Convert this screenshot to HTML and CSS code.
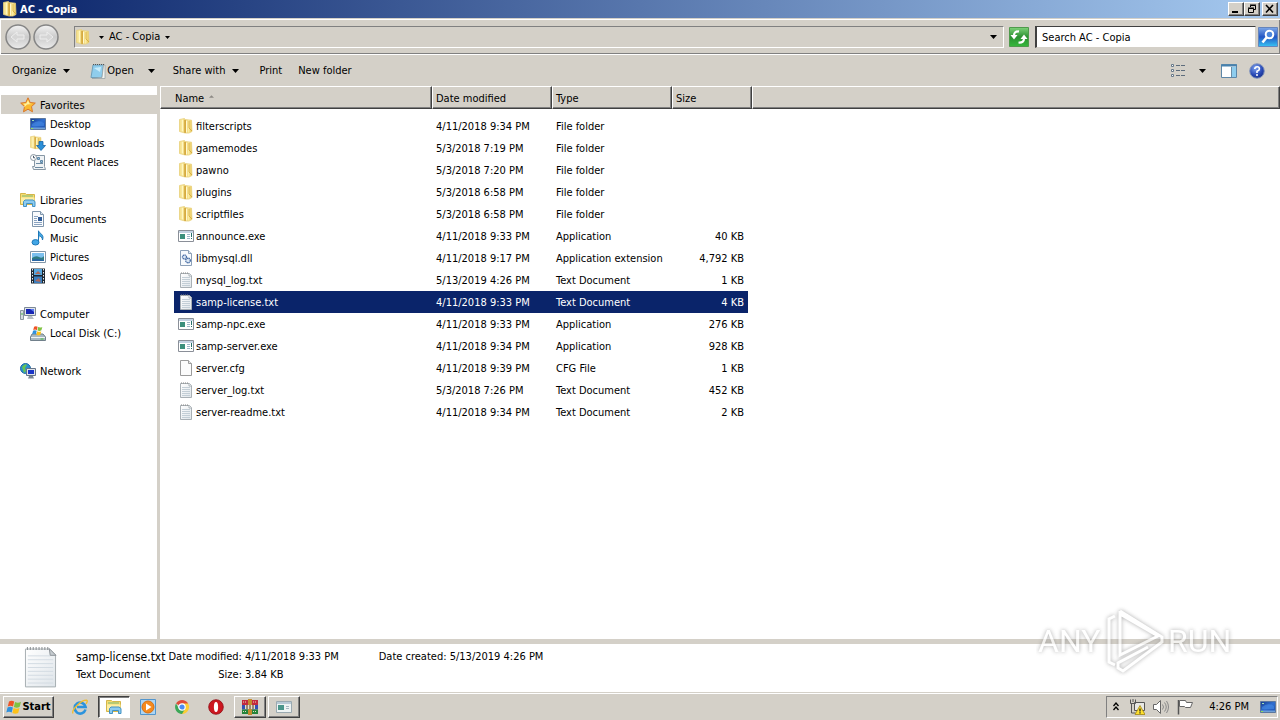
FILE: index.html
```html
<!DOCTYPE html>
<html lang="en">
<head>
<meta charset="utf-8">
<title>AC - Copia</title>
<link rel="stylesheet" href="styles.css">
</head>
<body>
<svg class="defs" aria-hidden="true">
  <defs>
    <linearGradient id="g-folder" x1="0" x2="1" y1="0" y2="0"><stop offset="0" stop-color="#f3dc84"/><stop offset=".25" stop-color="#fbeea6"/><stop offset=".5" stop-color="#e2b94a"/><stop offset=".7" stop-color="#fdf0a8"/><stop offset="1" stop-color="#e6c14f"/></linearGradient>
    <linearGradient id="g-paper" x1="0" x2="1" y1="0" y2="1"><stop offset="0" stop-color="#fff"/><stop offset="1" stop-color="#dfe5ea"/></linearGradient>
    <linearGradient id="g-screen" x1="0" x2="1" y1="0" y2="1"><stop offset="0" stop-color="#173a8c"/><stop offset=".5" stop-color="#2f6fd0"/><stop offset="1" stop-color="#1d4fae"/></linearGradient>
    <linearGradient id="g-green" x1="0" x2="0" y1="0" y2="1"><stop offset="0" stop-color="#7fd27a"/><stop offset=".5" stop-color="#2a9030"/><stop offset="1" stop-color="#36b83c"/></linearGradient>
    <linearGradient id="g-blue" x1="0" x2="0" y1="0" y2="1"><stop offset="0" stop-color="#7ea8e8"/><stop offset=".5" stop-color="#2356c4"/><stop offset="1" stop-color="#38c4f4"/></linearGradient>
    <linearGradient id="g-ball" x1="0" x2="0" y1="0" y2="1"><stop offset="0" stop-color="#f4f4f4"/><stop offset=".5" stop-color="#cbcbcb"/><stop offset="1" stop-color="#ececec"/></linearGradient>
    <radialGradient id="g-help" cx=".4" cy=".3" r=".8"><stop offset="0" stop-color="#7fa4f0"/><stop offset=".6" stop-color="#2747b4"/><stop offset="1" stop-color="#142a80"/></radialGradient>
  </defs>
  <symbol id="i-folder" viewBox="0 0 16 16"><path d="M1.500 1.500 6.500.5v1l7 .7.500 11.300-3 1.500H7l-5.500-1.500z" fill="url(#g-folder)" stroke="#e8d07c" stroke-width=".8"/><path d="M7 2v13" stroke="#c9982f"/><path d="M8.500 2.500v12" stroke="#fff9d0"/><path d="M4.500 2v11" stroke="#fff6c2"/><path d="M11 3v7l3 3" fill="none" stroke="#d2a63a" stroke-width=".8"/></symbol>
  <symbol id="i-txt" viewBox="0 0 16 16"><path d="M2.500 1.500h9l2 2v12h-11z" fill="url(#g-paper)" stroke="#a9b0b5"/><path d="M4 5.500h8M4 7.500h8M4 9.500h8M4 11.500h8M4 13.500h8" stroke="#c3ced6"/><path d="M3 1h8" stroke="#888" stroke-dasharray="1 1"/><path d="M11 1.500v2.500h2.500" fill="#fff" stroke="#9ba3a8" stroke-width=".8"/></symbol>
  <symbol id="i-bigtxt" viewBox="0 0 34 42"><path d="M1.500 2.500h25l6 6v33h-31z" fill="url(#g-paper)" stroke="#a5adb1"/><path d="M4 9.500h23M4 13.500h26M4 17.500h26M4 21.500h26M4 25.500h26M4 29.500h26M4 33.500h26M4 37.500h26" stroke="#d3dbe2"/><path d="M3 2h22" stroke="#858b8e" stroke-width="3" stroke-dasharray="1 2"/><path d="m26 2 1 7h6z" fill="#c6ccd0" stroke="#8d9499"/></symbol>
  <symbol id="i-file" viewBox="0 0 16 16"><path d="M2.500.5h8l3 3v12h-11z" fill="#fbfbfb" stroke="#9b9b9b"/><path d="M10.500.5v3h3" fill="#e5e5e5" stroke="#9b9b9b"/></symbol>
  <symbol id="i-dll" viewBox="0 0 16 16"><path d="M2.500.5h8l3 3v12h-11z" fill="#f7fafd" stroke="#8ca0b8"/><path d="M10.500.5v3h3" fill="#dce6f0" stroke="#8ca0b8"/><circle cx="6.500" cy="7" r="2" fill="#dce8f5" stroke="#4a6fa8" stroke-width="1.300" stroke-dasharray="1.200 .5"/><circle cx="10" cy="10.500" r="2.300" fill="#dce8f5" stroke="#39609c" stroke-width="1.300" stroke-dasharray="1.200 .5"/></symbol>
  <symbol id="i-exe" viewBox="0 0 16 16"><path d="M.5 2.500h15v11H.5z" fill="#fff" stroke="#8a8f98"/><path d="M1 3h14v2H1z" fill="#c4d2e2"/><path d="M2 6h5v5H2z" fill="#3c8f7c"/><path d="M9 6.500h3M9 8.500h3M9 10.500h3" stroke="#9db6c8"/><path d="M13.500 5v4M13.500 10v1" stroke="#27706a"/></symbol>
  <symbol id="i-star" viewBox="0 0 16 16"><path d="m8 .8 2.200 4.700 5.100.6-3.800 3.500 1 5.200L8 12.200l-4.500 2.600 1-5.200L.7 6.100l5.100-.6z" fill="#fbb92e" stroke="#d9772b"/><path d="m8 3 1.500 3.500 3 .4-5.500.6-3 3 .8-2.500L3 6.800l3.300-.4z" fill="#fff2a0"/></symbol>
  <symbol id="i-desktop" viewBox="0 0 16 16"><path d="M.5 2.500h15v11H.5z" fill="url(#g-screen)" stroke="#5c789f"/><path d="M1 11.500h14v1.500H1z" fill="#6f9fd6"/><path d="M2 4h2v1H2z" fill="#9fe0b0"/><path d="M1 12h2v1H1z" fill="#8ee05a"/><path d="M2 8q6-5 12-1v3H2z" fill="#468be5" opacity=".6"/></symbol>
  <symbol id="i-down" viewBox="0 0 16 16"><use href="#i-folder" x="-1" width="14" height="15"/><path d="M9 6.500h4v4h2.500L11 15.500 6.500 10.500H9z" fill="#2b8fd8" stroke="#1763a6" stroke-width=".8"/></symbol>
  <symbol id="i-recent" viewBox="0 0 16 16"><path d="M4.500 1.500h10v11l1 3h-12l-1-3h2z" fill="#f0f3f5" stroke="#8797a4"/><path d="M6 9.500h7M5 13.500h8" stroke="#6e8ba2"/><path d="M7.500 3.500h2v2h-2zM10.500 6.500h2v2h-2z" fill="#9cc0dd" stroke="#5e88a8"/><circle cx="3.500" cy="3.500" r="3" fill="#fff" stroke="#8a97a0"/><path d="M3.500 1.800v2h1.500" fill="none" stroke="#456"/></symbol>
  <symbol id="i-lib" viewBox="0 0 16 16"><path d="M.5 1.500h5l1 1h8v10H.5z" fill="#f6dc71" stroke="#d4b649"/><path d="M2 4h11" stroke="#78b878"/><path d="M1 5.500h13.500v6H1z" fill="#fdeea4"/><path d="M3.500 14.500v-5l1.500-1.500h8l2 1.500v5h-2.500v-3h-6v3z" fill="#8ccbf0" stroke="#4392c4"/></symbol>
  <symbol id="i-doc" viewBox="0 0 16 16"><path d="M2.500.5h8l3 3v12h-11z" fill="#f9fbfd" stroke="#8096ac"/><path d="M10.500.5v3h3" fill="#dce6f0" stroke="#8096ac"/><path d="M4 5.500h4M4 7.500h3M4 9.500h3M4 11.500h8M4 13.500h8" stroke="#8ba3c0"/><path d="M8 6h4v4H8z" fill="#2e5b98"/></symbol>
  <symbol id="i-music" viewBox="0 0 16 16"><path d="M8.500 12V.8C9.500 4 14.500 4 12.500 10 12.500 7 10 6 9.500 6" fill="#46a8e2" stroke="#1f78b8"/><ellipse cx="5.500" cy="12.300" rx="3.500" ry="2.700" fill="#42a6e6" stroke="#1f78b8"/></symbol>
  <symbol id="i-pic" viewBox="0 0 16 16"><path d="M.5 2.500h15v11H.5z" fill="#fff" stroke="#8296a8"/><path d="M2 4h12v8H2z" fill="#7cc0ee"/><path d="M2 9q4-3 7-1t5-1v5H2z" fill="#2f7c83"/><path d="M2 10.500q5-1 12 .5v1H2z" fill="#2966a4"/></symbol>
  <symbol id="i-video" viewBox="0 0 16 16"><path d="M1 .5h14v15H1z" fill="#1d2730"/><path d="M4 1h8v6H4z" fill="#56a8e0"/><path d="M4 8.500h8V15H4z" fill="#3a7fc0"/><path d="m5 6 3-3 3 3zM5 13l4-3 2 4z" fill="#af6a5c"/><path d="M2.500 1v14M13.500 1v14" stroke="#e8eef2" stroke-dasharray="1.500 1.500"/></symbol>
  <symbol id="i-computer" viewBox="0 0 16 16"><path d="M.5 4.500h3v9h-3z" fill="#d5dbe0" stroke="#8b96a0"/><path d="M1 8h2" stroke="#4cb84a"/><path d="M4.500 1.500h11v8h-11z" fill="#dfe4ea" stroke="#7c8896"/><path d="M6 3h8v5H6z" fill="#1726b4"/><path d="M10 3h4v3z" fill="#5c7bf0"/><path d="M8 10h4l2 3H7z" fill="#b8bfc6"/></symbol>
  <symbol id="i-disk" viewBox="0 0 16 16"><path d="M2 9h11l2.500 3v3.500H.5V12z" fill="#a9b8c1" stroke="#71808b"/><path d="M1 12.500h14" stroke="#eef3f5"/><path d="M10.500 14h3" stroke="#45c33d"/><use href="#i-win" x="2" y="0" width="11" height="11"/></symbol>
  <symbol id="i-win" viewBox="0 0 16 16"><path d="M3 2.500Q5.500.8 8.200 2.500L7 7.500Q4.500 5.800 1.800 7.500z" fill="#ef5325"/><path d="M9 3q3 1.500 6-.2l-1.300 5Q11 9.500 7.900 8z" fill="#7fc241"/><path d="M1.500 8.500Q4.200 6.800 6.900 8.500l-1.200 5Q3 12 .3 13.500z" fill="#2f91dd"/><path d="M7.600 9q3 1.500 5.900 0l-1.300 5q-2.700 1.600-5.800 0z" fill="#fdc21a"/></symbol>
  <symbol id="i-network" viewBox="0 0 16 16"><circle cx="5.500" cy="5.500" r="5" fill="#2a8fd0" stroke="#1f6aa6"/><path d="M2 4q3-4 5-2L5 5l1 3-2 2z" fill="#65c455"/><path d="M6.500 5.500h9v7h-9z" fill="#dfe4ea" stroke="#65748a"/><path d="M8 7h6v4H8z" fill="#1b36c8"/><path d="M9 13h4l1 2.500H8z" fill="#7b8794"/></symbol>
  <symbol id="i-note" viewBox="0 0 16 16"><path d="M3 2h10.500l-1.500 12.500H1z" fill="#8fcdec" stroke="#6ea0bb"/><path d="M13.500 2h1.500v13.500H2L12 14.500z" fill="#f4f4f0" stroke="#98a4a8" stroke-width=".8"/><path d="M3 1.500h11" stroke="#555" stroke-dasharray="1 1"/><path d="m4 5 7-1-1 5z" fill="#c9ecfb"/></symbol>
  <symbol id="i-tri" viewBox="0 0 7 4"><path d="M0 0h7L3.500 4z" fill="currentColor"/></symbol>
</svg>

<header class="titlebar">
  <svg class="ico"><use href="#i-folder"/></svg>
  <h1>AC - Copia</h1>
  <div class="winbtns">
    <button class="raised" aria-label="Minimize"><svg viewBox="0 0 12 10"><path d="M2 8h6" stroke="#000" stroke-width="2"/></svg></button>
    <button class="raised" aria-label="Restore"><svg viewBox="0 0 12 10"><path d="M4.500 3V1.500h5v4H8M4 1h6" fill="none" stroke="#000"/><path d="M2.500 4.500h5v4h-5zM2 4h6" fill="none" stroke="#000"/></svg></button>
    <button class="raised close" aria-label="Close"><svg viewBox="0 0 12 10"><path d="m2 1 7 7.500M9 1 2 8.500" stroke="#000" stroke-width="1.600"/></svg></button>
  </div>
</header>

<nav class="address" aria-label="Address">
  <div class="history">
    <button aria-label="Back"><svg viewBox="0 0 26 26"><circle cx="13" cy="13" r="12" fill="url(#g-ball)" stroke="#858585" stroke-width="1.500"/><path d="M6 13l6-5v3h7v4h-7v3z" fill="#d6d6d6" stroke="#eee"/></svg></button>
    <button aria-label="Forward"><svg viewBox="0 0 26 26"><circle cx="13" cy="13" r="12" fill="url(#g-ball)" stroke="#858585" stroke-width="1.500"/><path d="M20 13l-6-5v3H7v4h7v3z" fill="#d6d6d6" stroke="#eee"/></svg></button>
  </div>
  <div class="path inset">
    <svg class="ico"><use href="#i-folder"/></svg>
    <button class="crumb"><svg class="tri small"><use href="#i-tri"/></svg>AC - Copia<svg class="tri small"><use href="#i-tri"/></svg></button>
    <button class="drop" aria-label="Previous locations"><svg class="tri"><use href="#i-tri"/></svg></button>
  </div>
  <button class="square" aria-label="Refresh"><svg viewBox="0 0 20 20"><path d="M.5.5h19v19H.5z" fill="url(#g-green)" stroke="#4f9a4c"/><path d="M10 4.500Q5 4 5 8.500" fill="none" stroke="#fff" stroke-width="2.200"/><path d="M1.500 8h7L5 12.500z" fill="#fff"/><path d="M9.500 15.500q5.500.5 5.500-4" fill="none" stroke="#fff" stroke-width="2.200"/><path d="M11.500 12h7L15 7.500z" fill="#fff"/></svg></button>
  <input class="search inset" type="text" aria-label="Search" value="Search AC - Copia">
  <button class="square go" aria-label="Start search"><svg viewBox="0 0 20 20"><path d="M.5.5h19v19H.5z" fill="url(#g-blue)" stroke="#6685bb"/><circle cx="11.500" cy="7.500" r="3.800" fill="#4c86dc" stroke="#fff" stroke-width="2"/><path d="m8.500 10.500-4 5" stroke="#fff" stroke-width="2.600"/></svg></button>
</nav>

<div class="toolbar" role="toolbar">
  <button>Organize<svg class="tri"><use href="#i-tri"/></svg></button>
  <button class="open"><svg class="ico"><use href="#i-note"/></svg>Open<svg class="tri far"><use href="#i-tri"/></svg></button>
  <button>Share with<svg class="tri"><use href="#i-tri"/></svg></button>
  <button class="print">Print</button>
  <button>New folder</button>
  <div class="views">
    <button aria-label="View"><svg class="ico" viewBox="0 0 16 16"><path d="M1.500 1.500h2v2h-2zM1.500 6.500h2v2h-2zM1.500 11.500h2v2h-2z" fill="#fff" stroke="#66788a"/><path d="M6 2.500h10M6 7.500h10M6 12.500h10" stroke="#5d6c7c" stroke-dasharray="4 1"/></svg><svg class="tri"><use href="#i-tri"/></svg></button>
    <button aria-label="Preview pane"><svg class="ico" viewBox="0 0 16 16"><path d="M.5 1.500h15v13H.5z" fill="#fff" stroke="#5d87a8"/><path d="M0 2.500h16" stroke="#4882ae" stroke-width="2"/><path d="M10.500 4v10" stroke="#6b8ca5"/><path d="M11 4h4v10h-4z" fill="#8ecdee"/></svg></button>
    <button aria-label="Help"><svg class="ico" viewBox="0 0 16 16"><circle cx="8" cy="8" r="7.300" fill="url(#g-help)" stroke="#8496bd"/><path d="M5.700 6Q6 3.800 8.200 3.800T10.400 6Q10.400 7.300 8 8.300v1.600" fill="none" stroke="#fff" stroke-width="1.600"/><circle cx="8" cy="12" r="1" fill="#fff"/></svg></button>
  </div>
</div>

<main class="content">
  <nav class="tree" aria-label="Folders">
    <ul>
      <li class="root current"><a href="#"><svg class="ico"><use href="#i-star"/></svg>Favorites</a></li>
      <li><a href="#"><svg class="ico"><use href="#i-desktop"/></svg>Desktop</a></li>
      <li><a href="#"><svg class="ico"><use href="#i-down"/></svg>Downloads</a></li>
      <li><a href="#"><svg class="ico"><use href="#i-recent"/></svg>Recent Places</a></li>
    </ul>
    <ul>
      <li class="root"><a href="#"><svg class="ico"><use href="#i-lib"/></svg>Libraries</a></li>
      <li><a href="#"><svg class="ico"><use href="#i-doc"/></svg>Documents</a></li>
      <li><a href="#"><svg class="ico"><use href="#i-music"/></svg>Music</a></li>
      <li><a href="#"><svg class="ico"><use href="#i-pic"/></svg>Pictures</a></li>
      <li><a href="#"><svg class="ico"><use href="#i-video"/></svg>Videos</a></li>
    </ul>
    <ul>
      <li class="root"><a href="#"><svg class="ico"><use href="#i-computer"/></svg>Computer</a></li>
      <li><a href="#"><svg class="ico"><use href="#i-disk"/></svg>Local Disk (C:)</a></li>
    </ul>
    <ul>
      <li class="root"><a href="#"><svg class="ico"><use href="#i-network"/></svg>Network</a></li>
    </ul>
  </nav>

  <section class="files">
    <table>
      <colgroup><col class="c-name"><col class="c-date"><col class="c-type"><col class="c-size"><col></colgroup>
      <thead><tr><th>Name<svg class="sort" viewBox="0 0 6 3"><path d="M0 3h6L3 0z" fill="#8c8984"/></svg></th><th>Date modified</th><th>Type</th><th>Size</th><th></th></tr></thead>
      <tbody>
        <tr><td><div><svg class="ico"><use href="#i-folder"/></svg>filterscripts</div></td><td><div>4/11/2018 9:34 PM</div></td><td><div>File folder</div></td><td><div></div></td></tr>
        <tr><td><div><svg class="ico"><use href="#i-folder"/></svg>gamemodes</div></td><td><div>5/3/2018 7:19 PM</div></td><td><div>File folder</div></td><td><div></div></td></tr>
        <tr><td><div><svg class="ico"><use href="#i-folder"/></svg>pawno</div></td><td><div>5/3/2018 7:20 PM</div></td><td><div>File folder</div></td><td><div></div></td></tr>
        <tr><td><div><svg class="ico"><use href="#i-folder"/></svg>plugins</div></td><td><div>5/3/2018 6:58 PM</div></td><td><div>File folder</div></td><td><div></div></td></tr>
        <tr><td><div><svg class="ico"><use href="#i-folder"/></svg>scriptfiles</div></td><td><div>5/3/2018 6:58 PM</div></td><td><div>File folder</div></td><td><div></div></td></tr>
        <tr><td><div><svg class="ico"><use href="#i-exe"/></svg>announce.exe</div></td><td><div>4/11/2018 9:33 PM</div></td><td><div>Application</div></td><td><div>40 KB</div></td></tr>
        <tr><td><div><svg class="ico"><use href="#i-dll"/></svg>libmysql.dll</div></td><td><div>4/11/2018 9:17 PM</div></td><td><div>Application extension</div></td><td><div>4,792 KB</div></td></tr>
        <tr><td><div><svg class="ico"><use href="#i-txt"/></svg>mysql_log.txt</div></td><td><div>5/13/2019 4:26 PM</div></td><td><div>Text Document</div></td><td><div>1 KB</div></td></tr>
        <tr class="selected"><td><div><svg class="ico"><use href="#i-txt"/></svg>samp-license.txt</div></td><td><div>4/11/2018 9:33 PM</div></td><td><div>Text Document</div></td><td><div>4 KB</div></td></tr>
        <tr><td><div><svg class="ico"><use href="#i-exe"/></svg>samp-npc.exe</div></td><td><div>4/11/2018 9:33 PM</div></td><td><div>Application</div></td><td><div>276 KB</div></td></tr>
        <tr><td><div><svg class="ico"><use href="#i-exe"/></svg>samp-server.exe</div></td><td><div>4/11/2018 9:34 PM</div></td><td><div>Application</div></td><td><div>928 KB</div></td></tr>
        <tr><td><div><svg class="ico"><use href="#i-file"/></svg>server.cfg</div></td><td><div>4/11/2018 9:39 PM</div></td><td><div>CFG File</div></td><td><div>1 KB</div></td></tr>
        <tr><td><div><svg class="ico"><use href="#i-txt"/></svg>server_log.txt</div></td><td><div>5/3/2018 7:26 PM</div></td><td><div>Text Document</div></td><td><div>452 KB</div></td></tr>
        <tr><td><div><svg class="ico"><use href="#i-txt"/></svg>server-readme.txt</div></td><td><div>4/11/2018 9:34 PM</div></td><td><div>Text Document</div></td><td><div>2 KB</div></td></tr>
      </tbody>
    </table>
  </section>
</main>

<section class="details" aria-label="Details">
  <svg class="preview"><use href="#i-bigtxt"/></svg>
  <div class="summary">
    <strong>samp-license.txt</strong><span class="label">Date modified:</span><span>4/11/2018 9:33 PM</span><span class="created">Date created: 5/13/2019 4:26 PM</span>
    <span>Text Document</span><span class="label">Size:</span><span>3.84 KB</span>
  </div>
</section>

<footer class="taskbar">
  <button class="start raised"><svg class="ico"><use href="#i-win"/></svg>Start</button>
  <div class="tasks">
    <button aria-label="Internet Explorer"><svg class="ico" viewBox="0 0 16 16"><path d="M13.500 10.500A5.500 5.500 0 1 1 13.600 8H5" fill="none" stroke="#2b93dd" stroke-width="2.600"/><path d="M1 14.500Q-.5 12 5 6.500T14.800 1.200Q16 2 14 4.800" fill="none" stroke="#f1bd2d" stroke-width="1.300"/></svg></button>
    <button class="pressed" aria-label="Windows Explorer"><svg class="ico"><use href="#i-lib"/></svg></button>
    <button aria-label="Media Player"><svg class="ico" viewBox="0 0 16 16"><path d="M.5.5h15v15H.5z" fill="#acd5f4" stroke="#5295cc"/><circle cx="8" cy="8" r="6" fill="#f58a1e" stroke="#d96f10"/><path d="m6 4.500 5.500 3.500L6 11.500z" fill="#fff"/></svg></button>
    <button aria-label="Chrome"><svg class="ico" viewBox="0 0 16 16"><path d="M8 8 2 4.500A7 7 0 0 1 14.100 4.500z" fill="#e04a3a"/><path d="M8 8V4.500h6.100A7 7 0 0 1 8 15z" fill="#fbcd35"/><path d="M8 8 5 9.800 2 4.500A7 7 0 0 0 8 15l3-5z" fill="#3ba757"/><circle cx="8" cy="8" r="3.200" fill="#4b8bf4" stroke="#fff" stroke-width="1.200"/></svg></button>
    <button aria-label="Opera"><svg class="ico" viewBox="0 0 16 16"><circle cx="8" cy="8" r="7.300" fill="#cc1720" stroke="#8f0d14" stroke-width=".8"/><ellipse cx="8" cy="8" rx="2.100" ry="5" fill="#fff"/></svg></button>
    <button class="raised" aria-label="WinRAR"><svg class="ico" viewBox="0 0 16 16"><path d="M0 1h16v5H0z" fill="#c32a3f"/><path d="M0 6h16v4.500H0z" fill="#3450b5"/><path d="M0 10.500h16V15H0z" fill="#25843c"/><path d="M6 0h4v16H6z" fill="#c58b2f"/><path d="M1 3h4M11 3h4M1 12.500h4M11 12.500h4" stroke="#e6dbc0" stroke-dasharray="1 1"/><path d="M3 6h10v4H3z" fill="#e7dfcb"/><path d="M5 6v4M8 6v4M11 6v4" stroke="#4b3420"/></svg></button>
    <button class="raised" aria-label="Application"><svg class="ico" viewBox="0 0 16 16"><path d="M.5 2.500h15v11H.5z" fill="#eef3f3" stroke="#9aa9b0"/><path d="M1 3h14v2H1z" fill="#b8cad6"/><path d="M2 6h6v5H2z" fill="#4a968b"/><path d="M10 7.500h3M10 9.500h3" stroke="#a4b8c0"/></svg></button>
  </div>
  <div class="tray inset">
    <button aria-label="Show hidden icons"><svg class="chev" viewBox="0 0 6 9"><path d="m.5 4 2.500-3 2.500 3M.5 8 3 5l2.500 3" fill="none" stroke="#000" stroke-width="1.300"/></svg></button>
    <svg class="ico" viewBox="0 0 16 16"><path d="M5.500 3.500h10v8h-10z" fill="#e8e8e4" stroke="#555"/><path d="M1.500.5v4h5v-4M2.500 5v9h4M4 0v3" fill="none" stroke="#555"/><path d="m11 6.500 5 9H6z" fill="#ffe12e" stroke="#9f8415" stroke-width=".8"/><path d="M11 9.500v3M11 13.300v1.200" stroke="#222" stroke-width="1.300"/></svg>
    <svg class="ico" viewBox="0 0 16 16"><path d="M.5 5.500h3l4-4v13l-4-4h-3z" fill="#fff" stroke="#666"/><path d="M9.500 5.500q2 2.500 0 5M11.500 3.500q3.500 4.500 0 9M13.500 2q4 6 0 12" fill="none" stroke="#888"/></svg>
    <svg class="ico flag" viewBox="0 0 16 16"><path d="M1.500 1v14.500" stroke="#555" stroke-width="1.500"/><path d="M2.500 1.500h6l1 2h6l-2 5h-5l-1-1h-5z" fill="#fff" stroke="#666"/></svg>
    <time>4:26 PM</time>
    <svg class="ico"><use href="#i-desktop"/></svg>
  </div>
</footer>

<svg class="watermark" viewBox="0 0 200 70" aria-hidden="true">
  <g class="mark">
    <text x="2" y="46">ANY</text>
    <path d="M79 10 73 13v43l6 3M84 5v44l38-19-38-22M84 5l42 26v5L87 65l-5-3v-5l30-16" fill="none" stroke="#fff" stroke-width="3"/>
    <text x="132" y="46">RUN</text>
  </g>
</svg>
</body>
</html>
```
FILE: styles.css
```css
* { box-sizing: border-box; }

body {
  margin: 0;
  height: 100vh;
  min-height: 480px;
  display: flex;
  flex-direction: column;
  overflow: hidden;
  background: #d4d0c8;
  color: #000;
  font: 11px/14px "DejaVu Sans Condensed", "DejaVu Sans", sans-serif;
}

button {
  display: flex;
  align-items: center;
  justify-content: center;
  margin: 0;
  padding: 0;
  border: 0;
  background: none;
  color: inherit;
  font: inherit;
}

svg { display: block; flex: none; }
.defs { position: absolute; width: 0; height: 0; }
.ico { width: 16px; height: 16px; }
.tri { width: 7px; height: 4px; }
.tri.small { width: 5px; height: 3px; }

.inset { border: 1px solid; border-color: #808080 #fff #fff #808080; }

.raised {
  background: #d4d0c8;
  border: 1px solid;
  border-color: #fff #404040 #404040 #fff;
  box-shadow: inset -1px -1px 0 #808080;
}

/* Title bar */
.titlebar {
  display: flex;
  align-items: center;
  height: 18px;
  flex: none;
  padding: 0 2px;
  gap: 2px;
  background: linear-gradient(90deg, #0a246a, #a6caf0);
  color: #fff;
}
.titlebar h1 { margin: 0; padding-top: 2px; flex: 1; font-size: 11px; font-weight: bold; }
.winbtns { display: flex; }
.winbtns button { width: 16px; height: 14px; }
.winbtns svg { width: 12px; height: 10px; }
.winbtns .close { margin-left: 2px; }

/* Address bar */
.address {
  display: flex;
  align-items: center;
  height: 36px;
  flex: none;
  margin-top: 1px;
  padding: 0 2px 0 4px;
  border-top: 1px solid #fff;
  border-left: 1px solid #fff;
  border-bottom: 1px solid #fff;
  box-shadow: inset 0 -1px 0 #808080, inset -1px 0 0 #808080;
}
.history { display: flex; gap: 2px; margin-right: 15px; }
.history svg { width: 26px; height: 26px; }
.path { display: flex; align-items: center; flex: 1; height: 22px; margin-right: 5px; }
.crumb { gap: 5px; margin-left: 8px; }
.drop { margin-left: auto; width: 20px; height: 20px; }
.square svg { width: 20px; height: 20px; }
.search {
  width: 221px;
  height: 22px;
  margin: 0 2px 0 6px;
  padding: 0 5px;
  border-color: #404040 #d4d0c8 #d4d0c8 #404040;
  border-width: 1px 1px 1px 2px;
  background: #fff;
  font: inherit;
}

/* Command bar */
.toolbar { display: flex; align-items: center; height: 31px; flex: none; padding: 0 15px 0 12px; }
.toolbar button { margin-right: 20px; gap: 7px; }
.toolbar .open { gap: 1px; margin-right: 18px; }
.toolbar .far { margin-left: 13px; }
.toolbar .print { margin-right: 16px; }
.views { display: flex; margin-left: auto; gap: 12px; }
.toolbar .views button { margin: 0; gap: 13px; }
.toolbar .views button:first-child { margin-right: 3px; }

/* Folder tree */
.content { display: flex; flex: 1; min-height: 0; background: #fff; }
.tree { width: 160px; flex: none; padding-top: 9px; border-right: 3px solid #d4d0c8; }
.tree ul { margin: 0 0 19px; padding: 0; list-style: none; }
.tree a {
  display: flex;
  align-items: center;
  gap: 4px;
  height: 19px;
  margin-left: 1px;
  padding: 2px 0 0 29px;
  color: inherit;
  text-decoration: none;
}
.tree .ico { margin-bottom: 2px; }
.tree .root a { padding-left: 19px; }
.tree .current a { background: #d4d0c8; }

/* File list */
.files { flex: 1; min-width: 0; overflow: hidden; }
.files table { width: 100%; table-layout: fixed; border-collapse: separate; border-spacing: 0; }
.c-name { width: 272px; }
.c-date, .c-type { width: 120px; }
.c-size { width: 80px; }
th {
  height: 23px;
  padding: 2px 3px 0;
  background: #d4d0c8;
  border: 1px solid;
  border-color: #fff #404040 #404040 #fff;
  box-shadow: inset -1px -1px 0 #808080;
  font-weight: normal;
  text-align: left;
}
th:first-child { padding-left: 14px; }
.sort { display: inline-block; width: 5px; height: 3px; margin: 0 0 4px 5px; }
tbody::before { content: ""; display: block; height: 6px; }
td { padding: 0; }
td div { display: flex; align-items: center; height: 22px; padding: 2px 0 0 4px; gap: 2px; white-space: nowrap; }
td:first-child div { margin-left: 14px; }
td:nth-child(4) div { justify-content: flex-end; margin-right: 4px; padding-right: 4px; }
td .ico { margin-bottom: 3px; }
.selected div { background: #0a246a; color: #fff; }

/* Details pane */
.details {
  display: flex;
  flex: none;
  min-height: 53px;
  padding: 2px 24px 0;
  gap: 19px;
  border-top: 5px solid #d4d0c8;
  background: #fff;
}
.preview { width: 33px; height: 42px; }
.summary { display: grid; grid-template-columns: auto auto auto 1fr; grid-auto-rows: 18px; align-items: center; align-content: start; column-gap: 3px; padding-top: 2px; }
.summary strong { font-size: 12px; font-weight: normal; }
.label { text-align: right; }
.created { padding-left: 37px; }

/* Taskbar */
.taskbar {
  display: flex;
  align-items: center;
  height: 28px;
  flex: none;
  padding: 0 2px 0 3px;
  border-top: 1px solid #d4d0c8;
  box-shadow: inset 0 1px 0 #fff;
}
.start { width: 51px; height: 22px; font-weight: bold; }
.tasks { display: flex; gap: 2px; margin-left: 10px; }
.tasks button { width: 32px; height: 22px; }
.tasks .pressed { background: #fff; border: 1px solid; border-color: #404040 #fff #fff #404040; box-shadow: inset 1px 1px 0 #808080; }
.tray { display: flex; align-items: center; height: 22px; margin-left: auto; padding: 0 1px 0 6px; gap: 8px; }
.tray .chev { width: 6px; height: 9px; margin-right: 2px; }
.tray time { margin: 0 3px 0 8px; }

/* Watermark */
.watermark { position: absolute; right: 44px; bottom: 44px; width: 200px; height: 70px; pointer-events: none; }
.mark { opacity: .7; filter: drop-shadow(0 0 2px #888); }
.mark text { fill: #fff; font: 32px Roboto, "Liberation Sans", sans-serif; }
```
